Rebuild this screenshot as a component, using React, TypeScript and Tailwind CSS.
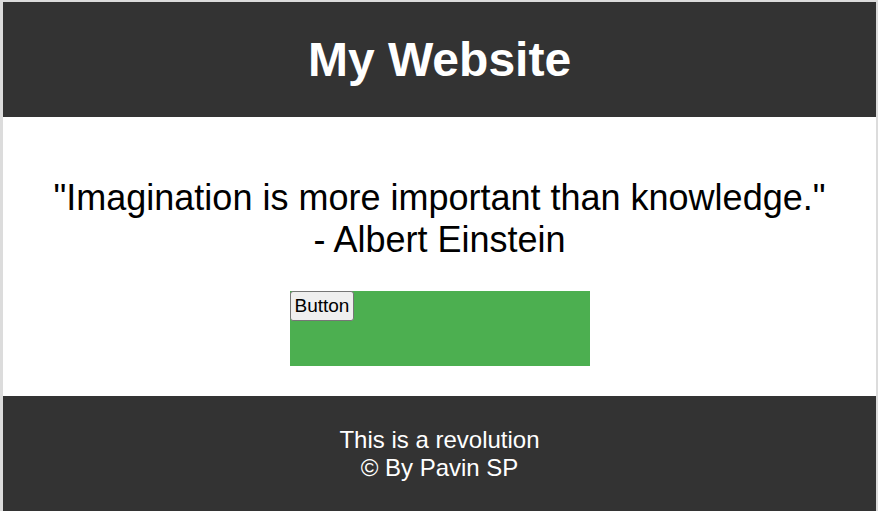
export default function App() {
  return (
    <div
      className="min-h-[511px] bg-white border-t-2 border-l-[3px] border-r-2 border-[#dcdcdc] flex flex-col"
      style={{ fontFamily: "'Liberation Sans', Arial, sans-serif" }}
    >
      {/* Header */}
      <header className="bg-[#333333] text-white text-center py-[30px]">
        <h1 className="text-[48px] font-bold leading-[55px]">My Website</h1>
      </header>

      {/* Main */}
      <main className="flex flex-col items-center pt-[60px] pb-[30px]">
        <p className="text-[36px] leading-[41.5px] text-black text-center">
          "Imagination is more important than knowledge."
          <br />- Albert Einstein
        </p>
        <div className="mt-[31px] w-[300px] h-[75px] bg-[#4caf50]">
          <button className="bg-[#efefef] border border-[#767676] rounded-[3px] px-[4px] py-[3px] text-[19px] leading-[22px] text-black">
            Button
          </button>
        </div>
      </main>

      {/* Footer */}
      <footer className="bg-[#333333] text-white text-center py-[30px] text-[24px] leading-[27.6px] flex-1">
        <p>This is a revolution</p>
        <p>© By Pavin SP</p>
      </footer>
    </div>
  )
}
